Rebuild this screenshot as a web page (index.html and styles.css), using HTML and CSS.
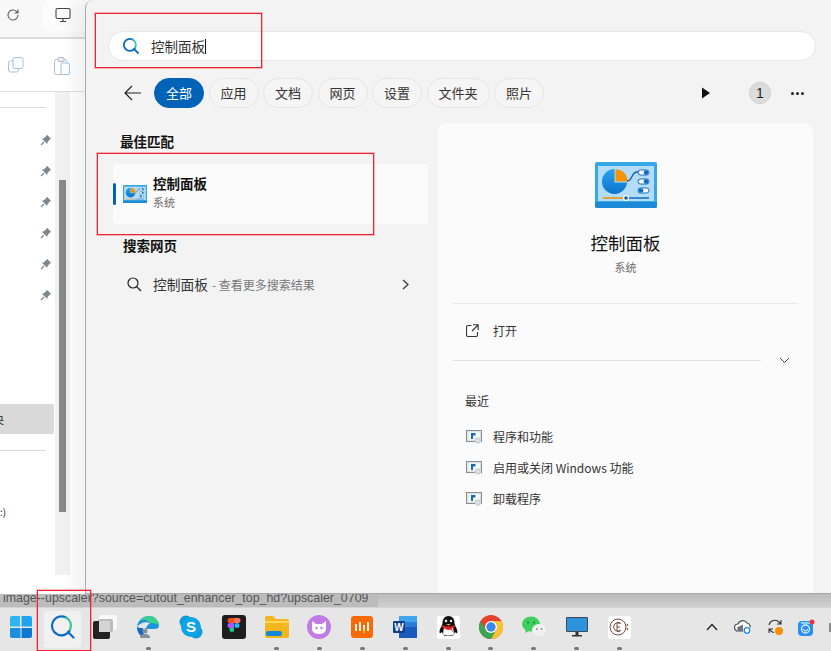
FILE: index.html
```html
<!DOCTYPE html>
<html lang="zh-CN">
<head>
  <meta charset="UTF-8">
  <title>控制面板 - 搜索</title>
  <link rel="stylesheet" href="styles.css">
</head>
<body>

<svg class="defs" width="0" height="0">
  <defs>
    <linearGradient id="pie" x1="0" y1="0" x2="0" y2="1">
      <stop offset="0" stop-color="#2aa3ee"/>
      <stop offset="1" stop-color="#0b74cc"/>
    </linearGradient>
  </defs>
  <symbol id="pin" viewBox="0 0 12 12">
    <path d="M7 .8l4.200 4.200-1.300.6-2.300 2.300-.4 2.100L1.900 4.700 4 4.300l2.300-2.300z" fill="#7d8790"/>
    <path d="M4 8L1 11" stroke="#7d8790" stroke-width="1.200"/>
  </symbol>
  <symbol id="program" viewBox="0 0 16 14">
    <rect x=".5" y=".5" width="15" height="11" fill="#dfe2e5" stroke="#8b8f93"/>
    <rect x="2.500" y="2.500" width="11" height="7" fill="#fff"/>
    <path d="M5 3h4.500v2.500H7V9H5z" fill="#0f6cc4"/>
    <circle cx="12" cy="10.500" r="3.200" fill="#cfd3d6"/>
    <circle cx="12" cy="10.500" r="1" fill="#f5f5f5"/>
  </symbol>
  <symbol id="cpanel" viewBox="0 0 62 46">
    <rect width="62" height="46" rx="2" fill="#38a7e6"/>
    <rect x="3" y="4" width="56" height="35" fill="#b3dcf6"/>
    <path d="M0 40h62v4a2 2 0 0 1-2 2H2a2 2 0 0 1-2-2z" fill="#1c8ad6"/>
    <circle cx="19.500" cy="19.500" r="12.500" fill="url(#pie)"/>
    <path d="M19.500 6h13.500v14.500H19.500z" fill="#b3dcf6"/>
    <path d="M20.500 7.500h1a11 12 0 0 1 11 12h-12z" fill="#f59300"/>
    <path d="M32 19c6 0 4-9 10-9h3" fill="none" stroke="#0f5fa8" stroke-width="1.300"/>
    <rect x="43" y="8" width="11" height="5" rx="2.500" fill="#fff" stroke="#0f6cc4"/>
    <rect x="43" y="17" width="11" height="5" rx="2.500" fill="#fff" stroke="#0f6cc4"/>
    <rect x="43" y="26" width="11" height="5" rx="2.500" fill="#fff" stroke="#0f6cc4"/>
    <circle cx="51" cy="10.500" r="2.300" fill="#0f6cc4"/>
    <circle cx="51" cy="19.500" r="2.300" fill="#0f6cc4"/>
    <circle cx="46" cy="28.500" r="2.300" fill="#0f6cc4"/>
    <path d="M8 36h22" stroke="#f08c00" stroke-width="1.500"/>
    <path d="M34 36h20" stroke="#0f6cc4" stroke-width="1.500"/>
    <circle cx="31" cy="36" r="3" fill="#fff"/>
    <circle cx="31" cy="36" r="1.800" fill="#0f5fa8"/>
  </symbol>
</svg>

<div class="explorer">
  <div class="ex-top">
    <svg class="ex-refresh" width="16" height="16" viewBox="0 0 16 16" fill="none" stroke="#5c5c5c" stroke-width="1.100"><path d="M13 8a5 5 0 1 1-1.500-3.600L13 6M13 2.500V6H9.500"/></svg>
    <div class="ex-monitor">
      <svg width="16" height="16" viewBox="0 0 16 16" fill="none" stroke="#444" stroke-width="1.100"><rect x="1" y="1.500" width="14" height="10" rx="1.500"/><path d="M5 14.500h6M8 11.500v3"/></svg>
    </div>
  </div>
  <div class="ex-tools">
    <svg width="16" height="16" viewBox="0 0 16 16" fill="none" stroke="#b5bcc2"><rect x=".5" y="4" width="10" height="11" rx="2"/><rect x="5" y=".5" width="10" height="11" rx="2" fill="#fff" stroke="#9cc3e4"/></svg>
    <svg width="16" height="18" viewBox="0 0 16 18" fill="none" stroke="#b5bcc2"><rect x=".5" y="2.500" width="12" height="15" rx="2"/><rect x="4" y=".5" width="6" height="4" rx="1" fill="#eee"/><rect x="7" y="6" width="8.500" height="11.500" rx="1.500" fill="#fff" stroke="#9cc3e4"/></svg>
  </div>
  <div class="ex-body">
    <div class="ex-nav">
      <div class="ex-pins">
        <svg width="12" height="12"><use href="#pin"/></svg>
        <svg width="12" height="12"><use href="#pin"/></svg>
        <svg width="12" height="12"><use href="#pin"/></svg>
        <svg width="12" height="12"><use href="#pin"/></svg>
        <svg width="12" height="12"><use href="#pin"/></svg>
        <svg width="12" height="12"><use href="#pin"/></svg>
      </div>
      <div class="ex-selected"><span>央</span></div>
      <div class="ex-drive">:)</div>
    </div>
    <div class="ex-scroll"><div class="ex-thumb"></div></div>
  </div>
</div>

<div class="panel">
  <div class="search-box">
    <svg width="18" height="18" viewBox="0 0 18 18" fill="none" stroke-width="1.800" stroke-linecap="round"><path d="M11 2.800A6 6 0 1 0 13 11" stroke="#0f6cc4"/><path d="M11 2.800A6 6 0 0 1 13 11" stroke="#35c5a0"/><path d="M12 12l4 4" stroke="#0f6cc4"/></svg>
    <span class="search-text">控制面板</span><span class="caret"></span>
  </div>

  <div class="tabs">
    <svg class="back" width="18" height="16" viewBox="0 0 18 16" fill="none" stroke="#222" stroke-width="1.200"><path d="M17 8H1M8 1L1 8l7 7"/></svg>
    <span class="tab active">全部</span>
    <span class="tab">应用</span>
    <span class="tab">文档</span>
    <span class="tab">网页</span>
    <span class="tab">设置</span>
    <span class="tab">文件夹</span>
    <span class="tab">照片</span>
    <div class="tabs-right">
      <svg width="10" height="12" viewBox="0 0 10 12"><path d="M1 .5l8 5.500-8 5.500z" fill="#111"/></svg>
      <span class="badge">1</span>
      <span class="dots"><i></i><i></i><i></i></span>
    </div>
  </div>

  <div class="results">
    <div class="left">
      <h3 class="best-title">最佳匹配</h3>
      <div class="best">
        <span class="bar"></span>
        <svg width="24" height="18"><use href="#cpanel"/></svg>
        <div class="best-text">
          <div class="best-name">控制面板</div>
          <div class="best-sub">系统</div>
        </div>
      </div>
      <h3 class="web-title">搜索网页</h3>
      <div class="web-row">
        <svg width="15" height="15" viewBox="0 0 15 15" fill="none" stroke="#222" stroke-width="1.200"><circle cx="6" cy="6" r="5"/><path d="M9.500 9.500L14 14"/></svg>
        <span class="web-name">控制面板</span>
        <span class="web-more"> - 查看更多搜索结果</span>
        <svg class="web-arrow" width="7" height="11" viewBox="0 0 7 11" fill="none" stroke="#333" stroke-width="1.200"><path d="M1 1l5 4.500L1 10"/></svg>
      </div>
    </div>

    <div class="detail">
      <svg class="detail-icon" width="62" height="46"><use href="#cpanel"/></svg>
      <div class="detail-name">控制面板</div>
      <div class="detail-sub">系统</div>
      <div class="rule"></div>
      <div class="open-row">
        <svg width="13" height="13" viewBox="0 0 13 13" fill="none" stroke="#333" stroke-width="1.100"><path d="M5.500 1.500H2A1.500 1.500 0 0 0 .5 3v8A1.500 1.500 0 0 0 2 12.500h8a1.500 1.500 0 0 0 1.500-1.500V8M7 .8h5.200V6M12 1L6 7"/></svg>
        <span>打开</span>
      </div>
      <div class="more-row">
        <div class="rule-short"></div>
        <svg width="11" height="7" viewBox="0 0 11 7" fill="none" stroke="#444"><path d="M1 1l4.500 4.500L10 1"/></svg>
      </div>
      <div class="recent-title">最近</div>
      <div class="recent">
        <svg width="16" height="14"><use href="#program"/></svg>
        <span>程序和功能</span>
      </div>
      <div class="recent">
        <svg width="16" height="14"><use href="#program"/></svg>
        <span>启用或关闭 Windows 功能</span>
      </div>
      <div class="recent">
        <svg width="16" height="14"><use href="#program"/></svg>
        <span>卸载程序</span>
      </div>
    </div>
  </div>
</div>

<div class="strip"><span>image--upscaler?source=cutout_enhancer_top_hd?upscaler_0709</span></div>

<div class="taskbar">
  <div class="task start">
    <svg width="24" height="24" viewBox="0 0 24 24"><path d="M1 3a2 2 0 0 1 2-2h8v10.500H1z" fill="#2fb4f2"/><path d="M12.500 1H21a2 2 0 0 1 2 2v8.500H12.500z" fill="#1fa3ec"/><path d="M1 13h10.500v10H3a2 2 0 0 1-2-2z" fill="#1a8fe0"/><path d="M12.500 13H23v8a2 2 0 0 1-2 2h-8.500z" fill="#0f79d2"/></svg>
  </div>
  <div class="task search-task">
    <svg width="25" height="26" viewBox="0 0 25 26" fill="none" stroke-width="2.200" stroke-linecap="round"><path d="M16 3.500A9.500 9.500 0 1 0 20 16" stroke="#0f6cc4"/><path d="M16 3.500A9.500 9.500 0 0 1 20 16" stroke="#35c58a"/><path d="M18 18l5.500 5.500" stroke="#0f6cc4"/></svg>
  </div>
  <div class="task">
    <svg width="24" height="24" viewBox="0 0 24 24"><rect x="6" y="0" width="18" height="15" rx="2" fill="#f8f8f8"/><rect x="5" y="4" width="15" height="13" rx="2" fill="#bcbcbc"/><rect y="6" width="17" height="18" rx="2" fill="#222"/><path d="M6 6h11v11H6z" fill="#d5d5d5"/></svg>
  </div>
  <div class="task on">
    <svg width="24" height="24" viewBox="0 0 24 24"><path d="M1 12C2 5 7 1 13 1c6 0 10 5 10 10 0 2-2 3-5 3H10c0-3 2-4 4-6-5-2-10 0-13 4z" fill="#1b93dd"/><path d="M14 8c4 0 8 1 9 3 0-5-4-10-10-10C9 1 6 3 4 6c3-2 7-2 10 2z" fill="#3ad08f"/><path d="M1 12c0 6 4 11 10 11 1 0 2 0 3-1-5 0-8-4-7-9-2 0-4 0-6-1z" fill="#0f6cc4"/><circle cx="9" cy="16" r="2.500" fill="#8a8f94"/><path d="M4 23c0-3 2-4 5-4s5 1 5 4z" fill="#8a8f94"/></svg>
  </div>
  <div class="task">
    <svg width="24" height="24" viewBox="0 0 24 24"><circle cx="7" cy="7" r="6.500" fill="#0e9bdc"/><circle cx="17" cy="17" r="6.500" fill="#0e9bdc"/><circle cx="12" cy="12" r="10" fill="#0ea5e6"/><text x="12" y="17" class="skype">S</text></svg>
  </div>
  <div class="task">
    <svg width="24" height="24" viewBox="0 0 24 24"><rect width="24" height="24" rx="3" fill="#1e1e1e"/><path d="M8 3h4v5H8a2.500 2.500 0 0 1 0-5z" fill="#f24e1e"/><path d="M12 3h4a2.500 2.500 0 0 1 0 5h-4z" fill="#ff7262"/><path d="M8 8h4v5H8a2.500 2.500 0 0 1 0-5z" fill="#a259ff"/><circle cx="15" cy="10.500" r="2.500" fill="#1abcfe"/><path d="M8 13h4v3a2.500 2.500 0 1 1-4-3z" fill="#0acf83"/></svg>
  </div>
  <div class="task on">
    <svg width="24" height="22" viewBox="0 0 24 22"><path d="M0 2a2 2 0 0 1 2-2h6l3 3h11a2 2 0 0 1 2 2v15a2 2 0 0 1-2 2H2a2 2 0 0 1-2-2z" fill="#f3b61f"/><path d="M0 5h24v2H0z" fill="#ffd65c"/><rect x="1" y="15" width="16" height="5" rx="2" fill="#1188d8"/></svg>
  </div>
  <div class="task on">
    <svg width="24" height="24" viewBox="0 0 24 24"><circle cx="12" cy="12" r="12" fill="#c17be6"/><path d="M5 6l4 3h6l4-3v8c0 3-3 5-7 5s-7-2-7-5z" fill="#fff"/><circle cx="9.500" cy="13" r="1.200" fill="#c17be6"/><circle cx="14.500" cy="13" r="1.200" fill="#c17be6"/></svg>
  </div>
  <div class="task on">
    <svg width="22" height="22" viewBox="0 0 22 22"><rect width="22" height="22" rx="3" fill="#f66a0a"/><path d="M5 8v7M9 6v9M13 9v6M17 6v9" stroke="#fff" stroke-width="1.800"/><path d="M13 13v4" stroke="#ffc83d" stroke-width="1.800"/></svg>
  </div>
  <div class="task on">
    <svg width="24" height="22" viewBox="0 0 24 22"><path d="M6 0h18v22H6z" fill="#185abd"/><path d="M6 0h18v6H6z" fill="#41a5ee"/><path d="M6 6h18v5H6z" fill="#2b7cd3"/><rect y="5" width="12" height="12" rx="1" fill="#103f91"/><text x="6" y="14.500" class="word">W</text></svg>
  </div>
  <div class="task on">
    <div class="qq">
      <svg width="19" height="22" viewBox="0 0 19 22"><path d="M9.500 0c4 0 6 3 6 7 0 2 3 6 3 9 0 2-1.500 1-2.500 0-.5 2-2 3-3 4H6c-1-1-2.500-2-3-4-1 1-2.500 2-2.500 0 0-3 3-7 3-9 0-4 2-7 6-7z" fill="#111"/><path d="M5 11c2 1 7 1 9 0l1 7c-2 2-9 2-11 0z" fill="#fff"/><path d="M3.500 9c3 2 9 2 12 0l.5 2-3 1.500 1 4-2-3c-2 .5-3 .5-5 0L3 11z" fill="#e5242a"/><path d="M7 8h5l-2.500 1.500z" fill="#f6b21b"/><circle cx="7" cy="5" r="1.200" fill="#fff"/><circle cx="12" cy="5" r="1.200" fill="#fff"/></svg>
    </div>
  </div>
  <div class="task on">
    <svg width="24" height="24" viewBox="0 0 24 24"><circle cx="12" cy="12" r="12" fill="#e5432f"/><path d="M12 24a12 12 0 0 0 10.400-18H12l5 9z" fill="#f7c42f"/><path d="M1.600 6A12 12 0 0 0 12 24l5-9H7z" fill="#3aa655"/><circle cx="12" cy="12" r="6" fill="#fff"/><circle cx="12" cy="12" r="4.700" fill="#3f86ea"/></svg>
  </div>
  <div class="task on">
    <svg width="24" height="22" viewBox="0 0 24 22"><ellipse cx="9" cy="8" rx="9" ry="7.500" fill="#3fcf5c"/><path d="M4 13l-1 4 4-2z" fill="#3fcf5c"/><circle cx="6" cy="6.500" r="1.100" fill="#1f8f3a"/><circle cx="12" cy="6.500" r="1.100" fill="#1f8f3a"/><ellipse cx="17" cy="14" rx="7" ry="6" fill="#f1f1f1"/><circle cx="15" cy="13" r=".9" fill="#8a8a8a"/><circle cx="19.500" cy="13" r=".9" fill="#8a8a8a"/></svg>
  </div>
  <div class="task on">
    <svg width="22" height="20" viewBox="0 0 22 20"><rect width="22" height="15" rx="1" fill="#3c4a56"/><rect x="1" y="1" width="20" height="13" fill="#2f92dc"/><path d="M9.500 15h3v3h-3z" fill="#333"/><path d="M6 18h10v1.500H6z" fill="#333"/></svg>
  </div>
  <div class="task on">
    <div class="ce-logo">
      <svg width="20" height="20" viewBox="0 0 20 20" fill="none" stroke="#7a4a42" stroke-width="1"><circle cx="9" cy="10" r="8"/><path d="M12 6.500a4.500 4.500 0 1 0 0 7"/><path d="M8 6v8M8 6h3M8 10h3M8 14h3"/><circle cx="18.500" cy="8" r=".6"/><circle cx="18.500" cy="12" r=".6"/></svg>
    </div>
  </div>

  <div class="tray">
    <svg class="tray-chevron" width="12" height="8" viewBox="0 0 12 8" fill="none" stroke="#222" stroke-width="1.300"><path d="M1 7l5-5.500L11 7"/></svg>
    <svg width="18" height="16" viewBox="0 0 18 16"><path d="M4 12a3.500 3.500 0 0 1 0-7 5 5 0 0 1 9-1 3.500 3.500 0 0 1 2 6v2z" fill="#fff" stroke="#4a4f55" stroke-width="1.200"/><path d="M3 8.500l6-3v6.500H4z" fill="#6d7379"/><circle cx="13" cy="11.500" r="4" fill="#fff"/><circle cx="13" cy="11.500" r="2.800" fill="none" stroke="#1e88e5" stroke-width="1.300"/></svg>
    <svg width="18" height="18" viewBox="0 0 18 18"><path d="M3 7a6 6 0 0 1 10-3l2 2M15 2v4h-4M3 15v-4h4M3 11l2 2a6 6 0 0 0 3 1.500" fill="none" stroke="#333" stroke-width="1.100"/><circle cx="13" cy="13" r="4" fill="#f59000"/></svg>
    <svg width="17" height="17" viewBox="0 0 17 17"><rect y="2" width="15" height="15" rx="4" fill="#2d8df0"/><path d="M3 3h9v2H3z" fill="#7fd8f5"/><circle cx="7.500" cy="10" r="4" fill="none" stroke="#d8f2ff" stroke-width="1.300"/><path d="M5.500 10a2 2 0 0 0 4 0" fill="none" stroke="#fff"/><circle cx="14" cy="3" r="2.500" fill="#f0343c"/></svg>
    <span class="tray-cut"></span>
  </div>
</div>

<div class="mark mark-search"></div>
<div class="mark mark-best"></div>
<div class="mark mark-task"></div>

</body>
</html>
```

FILE: styles.css
```css
* {
  box-sizing: border-box;
}

body {
  margin: 0;
  width: 831px;
  height: 651px;
  position: relative;
  overflow: hidden;
  background: #fff;
  font-family: "Noto Sans CJK SC", "Liberation Sans", sans-serif;
  color: #1c1c1c;
}

.defs {
  position: absolute;
}

svg {
  display: block;
  flex: none;
}

/* explorer window behind the search panel */
.explorer {
  position: absolute;
  left: 0;
  top: 0;
  width: 86px;
  height: 593px;
  background: #fff;
}

.ex-top {
  height: 39px;
  display: flex;
  background: #f8f8f8;
  border-bottom: 2px solid #dcdcdc;
}

.ex-refresh {
  margin: 7px 0 0 5px;
}

.ex-monitor {
  margin-left: 22px;
  width: 43px;
  height: 31px;
  background: #fcfcfc;
  border-radius: 5px;
  padding: 7px 0 0 12px;
}

.ex-tools {
  height: 53px;
  display: flex;
  gap: 30px;
  padding: 18px 0 0 8px;
  background: #fff;
  border-bottom: 1px solid #dedede;
}

.ex-body {
  display: flex;
  height: 501px;
}

.ex-nav {
  width: 55px;
  flex: none;
  position: relative;
}

.ex-pins {
  margin-top: 15px;
  padding-top: 26px;
  border-top: 1px solid #dcdcdc;
  display: flex;
  flex-direction: column;
  align-items: flex-end;
  gap: 19px;
  width: 46px;
}

.ex-pins svg {
  margin-right: -6px;
}

.ex-selected {
  margin-top: 103px;
  height: 30px;
  width: 54px;
  background: #d9d9d9;
  border-radius: 0 2px 2px 0;
  font-size: 11px;
  line-height: 30px;
  overflow: hidden;
}

.ex-selected span {
  display: block;
  margin-left: -7px;
}

.ex-drive {
  margin-top: 16px;
  width: 46px;
  border-top: 1px solid #dcdcdc;
  padding-top: 54px;
  font-size: 10px;
  line-height: 14px;
}

.ex-scroll {
  width: 15px;
  height: 483px;
  background: #f1f1f1;
  padding: 88px 4px 0;
}

.ex-thumb {
  width: 7px;
  height: 332px;
  background: #888;
}

/* search panel */
.panel {
  position: absolute;
  left: 85px;
  top: 0;
  width: 746px;
  height: 594px;
  padding: 31px 15px 0 22px;
  background: #f3f3f3;
  border-left: 1px solid #a9a9a9;
  border-bottom: 1px solid #a9a9a9;
  border-top-left-radius: 8px;
  box-shadow: -12px 0 14px rgba(0, 0, 0, .05);
}

.search-box {
  height: 30px;
  background: #fff;
  border: 1px solid #e6e6e6;
  border-radius: 15px;
  display: flex;
  align-items: center;
  padding-left: 13px;
}

.search-text {
  margin-left: 11px;
  font-size: 13.500px;
  color: #333;
}

.caret {
  width: 1px;
  height: 15px;
  background: #111;
}

.tabs {
  margin-top: 17px;
  height: 30px;
  display: flex;
  align-items: center;
  gap: 4.500px;
}

.back {
  margin: 0 7.500px 0 16px;
}

.tab {
  height: 30px;
  line-height: 27px;
  padding: 0 11px;
  border: 1px solid #e5e5e5;
  border-radius: 15px;
  background: #f5f5f5;
  font-size: 13px;
  color: #333;
}

.tab.active {
  background: #0063b8;
  border-color: #0063b8;
  color: #fff;
}

.tabs-right {
  margin-left: auto;
  margin-right: 12px;
  display: flex;
  align-items: center;
  gap: 38px;
}

.badge {
  width: 22px;
  height: 22px;
  border-radius: 50%;
  background: #dcdcdc;
  border: 1px solid #cfcfcf;
  text-align: center;
  font-family: "Liberation Sans", sans-serif;
  font-size: 14px;
  line-height: 20px;
  margin-right: -18px;
}

.dots {
  display: flex;
  gap: 2px;
}

.dots i {
  width: 3px;
  height: 3px;
  border-radius: 50%;
  background: #222;
}

.results {
  margin-top: 15px;
  display: flex;
  gap: 10px;
  height: 470px;
}

.left {
  width: 315px;
  margin-left: 5px;
  flex: none;
}

h3 {
  margin: 0;
  font-size: 13.500px;
  line-height: 18px;
  font-weight: 700;
  color: #111;
}

.best-title {
  margin: 9px 0 14px 7px;
}

.best {
  height: 60px;
  background: #fbfbfb;
  border-radius: 4px;
  position: relative;
  display: flex;
  align-items: center;
  gap: 6px;
  padding: 0 0 0 10px;
}

.bar {
  position: absolute;
  left: 0;
  top: 19px;
  width: 3px;
  height: 22px;
  background: #0063b8;
  border-radius: 2px;
}

.best-text {
  margin-bottom: 4px;
}

.best-name {
  font-size: 13.500px;
  line-height: 18px;
  font-weight: 700;
  color: #111;
}

.best-sub {
  margin-top: 2px;
  font-size: 11px;
  line-height: 16px;
  color: #6e6e6e;
}

.web-title {
  margin: 12px 0 0 10px;
}

.web-row {
  margin-top: 19px;
  height: 22px;
  display: flex;
  align-items: center;
  padding-left: 14px;
  position: relative;
}

.web-name {
  margin-left: 11px;
  font-size: 13.750px;
  color: #333;
}

.web-more {
  margin-left: 4px;
  font-size: 12px;
  color: #777;
}

.web-arrow {
  position: absolute;
  left: 289px;
  top: 6px;
}

.detail {
  width: 375px;
  flex: none;
  background: #fbfbfb;
  border-radius: 8px 8px 0 0;
  padding: 39px 15px 0;
}

.detail-icon {
  margin: 0 auto;
}

.detail-name {
  margin-top: 23px;
  text-align: center;
  font-size: 17.500px;
  line-height: 24px;
  color: #111;
}

.detail-sub {
  margin-top: 3px;
  text-align: center;
  font-size: 11px;
  line-height: 18px;
  color: #6e6e6e;
}

.rule {
  margin-top: 27px;
  height: 1px;
  background: #e8e8e8;
}

.open-row {
  margin-top: 16px;
  height: 20px;
  display: flex;
  align-items: center;
  gap: 14px;
  padding-left: 13px;
  font-size: 12px;
  color: #333;
}

.more-row {
  margin-top: 17px;
  display: flex;
  align-items: center;
  gap: 18px;
}

.rule-short {
  width: 308px;
  height: 1px;
  background: #e2e2e2;
}

.recent-title {
  margin: 27px 0 0 12px;
  font-size: 12px;
  line-height: 20px;
  color: #333;
}

.recent {
  height: 31px;
  display: flex;
  align-items: center;
  gap: 11px;
  padding-left: 13px;
  font-size: 12px;
  color: #333;
}

.recent-title + .recent {
  margin-top: 10px;
}

/* strip of page behind the taskbar */
.strip {
  position: absolute;
  left: 0;
  top: 594px;
  width: 831px;
  height: 13px;
  background: linear-gradient(#bbb, #cfcfcf);
  overflow: hidden;
}

.strip span {
  display: block;
  width: 378px;
  height: 13px;
  padding-left: 3px;
  background: #bcbcbc;
  font-family: "Liberation Sans", sans-serif;
  font-size: 12.400px;
  line-height: 9px;
  color: #555;
  white-space: nowrap;
  overflow: hidden;
}

.taskbar {
  position: absolute;
  left: 0;
  top: 607px;
  width: 831px;
  height: 44px;
  background: #e6e6e6;
  border-top: 1px solid #d4d4d4;
  display: flex;
}

.task {
  width: 42.850px;
  height: 43px;
  flex: none;
  display: flex;
  align-items: center;
  justify-content: center;
  position: relative;
  padding-bottom: 5px;
}

.task.start {
  width: 41px;
}

.task.on::after {
  content: "";
  position: absolute;
  left: 50%;
  bottom: 1px;
  width: 5px;
  height: 3px;
  margin-left: -2.500px;
  border-radius: 2px;
  background: #777;
}

.search-task::before {
  content: "";
  position: absolute;
  left: 3px;
  top: 3px;
  width: 37px;
  height: 37px;
  border-radius: 4px;
  background: #f1f1f1;
}

.search-task svg {
  position: relative;
}

.skype {
  font-family: "Liberation Sans", sans-serif;
  font-size: 15px;
  font-weight: 700;
  fill: #fff;
  text-anchor: middle;
}

.word {
  font-family: "Liberation Sans", sans-serif;
  font-size: 10px;
  font-weight: 700;
  fill: #fff;
  text-anchor: middle;
}

.qq,
.ce-logo {
  width: 23px;
  height: 23px;
  background: #fff;
  border-radius: 3px;
  display: flex;
  align-items: center;
  justify-content: center;
}

.tray {
  margin-left: auto;
  padding-bottom: 5px;
  display: flex;
  align-items: center;
  gap: 14px;
}

.tray-chevron {
  margin-right: 2px;
}

.tray-cut {
  width: 2px;
  height: 9px;
  background: #8a8a8a;
}

/* red annotation boxes */
.mark {
  position: absolute;
  border: 1px solid #ee2233;
  box-shadow: 0 0 0 1px rgba(238, 34, 51, .3);
  pointer-events: none;
}

.mark-search {
  left: 95px;
  top: 13px;
  width: 167px;
  height: 55px;
}

.mark-best {
  left: 97px;
  top: 153px;
  width: 277px;
  height: 82px;
}

.mark-task {
  left: 37px;
  top: 590px;
  width: 54px;
  height: 61px;
}
```
